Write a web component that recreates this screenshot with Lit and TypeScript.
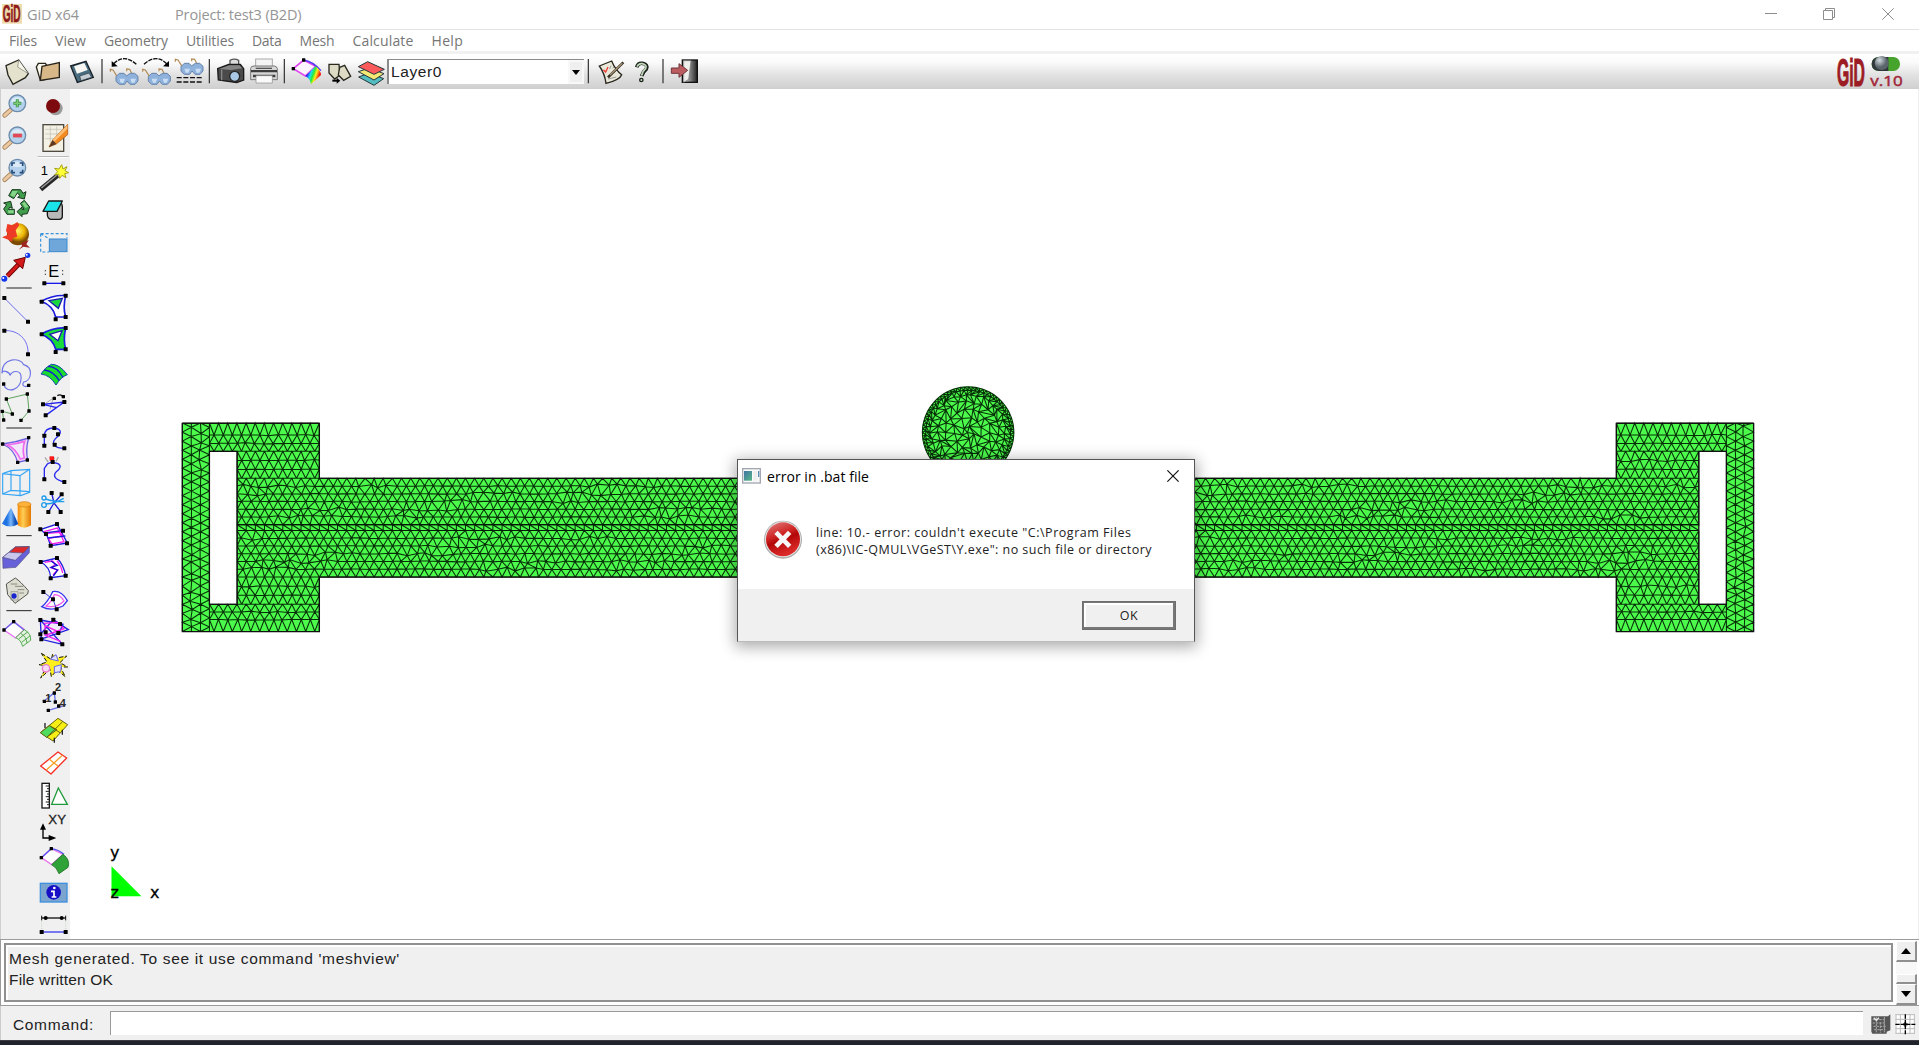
import { LitElement, html, svg, css } from "lit";
import { customElement } from "lit/decorators.js";

type Cell = [number, number, unknown];

/* ---------- small drawing helpers ---------- */
const dots = (pts: number[][], r = 6) =>
  pts.map(([x, y]) => svg`<rect x=${x - r} y=${y - r} width=${r * 2} height=${r * 2} rx="1.5" fill="#000"/>`);

const frame = (x0: number, x1: number, y0: number, y1: number, body: unknown) => html`<svg
  class="ic" width=${(x1 - x0) / 3} height=${(y1 - y0) / 3}
  viewBox="${x0} ${y0} ${x1 - x0} ${y1 - y0}">${body}</svg>`;

const lens = (y: number, mark: unknown) => svg`
  <path d="M14 ${y + 36} L32 ${y + 20}" stroke="#a5835c" stroke-width="14" stroke-linecap="round"/>
  <path d="M14 ${y + 36} L32 ${y + 20}" stroke="#ecc9a0" stroke-width="9" stroke-linecap="round"/>
  <circle cx="52" cy=${y} r="25" fill="#b4d2ee" stroke="#6d8cab" stroke-width="4"/>
  <path d="M33 ${y - 5} A20 19 0 0 1 71 ${y - 5} Q52 ${y + 2} 33 ${y - 5}" fill="#dcebf8"/>${mark}`;

const glasses = (x: number, y: number) => svg`
  <g fill="none" stroke="#b28a52" stroke-width="3.5"><path d="M${x + 22} ${y + 26} L${x + 8} ${y + 4} L${x} ${y + 2} V${y + 9}"/>
  <path d="M${x + 68} ${y + 22} L${x + 58} ${y + 2} L${x + 49} ${y + 1} V${y + 8}"/></g>
  <path d="M${x + 27} ${y + 14} h14 l8 8 6 -5 6 -3 h12 l10 9 v14 l-9 10 h-15 l-9 -10 -7 10 h-16 l-10 -9 v-14 z" fill="#8fb2dc" stroke="#6784aa" stroke-width="3"/>
  <path d="M${x + 27} ${y + 30} h17 l-5 12 h-8z M${x + 60} ${y + 30} h17 l-5 12 h-8z" fill="#c9def3"/>`;

/* ---------- left tool columns ---------- */
const colA: Cell[] = [
  [12, 108, lens(55, svg`<path d="M52 43v24M40 55h24" stroke="#3e9a4a" stroke-width="9"/><path d="M52 45v20M42 55h20" stroke="#7fca77" stroke-width="4"/>`)],
  [108, 207, lens(151, svg`<rect x="39" y="146" width="27" height="11" fill="#e2475a" stroke="#b98" stroke-width="1"/>`)],
  [207, 300, lens(248, svg`<path d="M36 243v-9h9M59 234h9v9M68 254v9h-9M45 263h-9v-9" fill="none" stroke="#244a78" stroke-width="5"/>`)],
  [300, 402, svg`<g fill="#3f9d4c" stroke="#17361b" stroke-width="3" stroke-linejoin="round">
    <path d="M26 332 L36 314 H62 L69 325 L78 320 L73 342 L53 337 L60 332 L52 324 L41 341Z"/>
    <path d="M73 346 L89 366 L82 386 L66 388 V395 L51 380 L66 366 V373 H72 L61 355Z"/>
    <path d="M43 388 H21 L11 372 L20 359 L11 354 L32 349 L37 370 L30 366 L25 373 H43Z"/></g>
    <path d="M37 318h16l-10 18-12-5z M66 355l8-5 11 15-9 4z M24 376h17v9H25z" fill="#85d489"/>`],
  [402, 498, svg`<defs><radialGradient id="sph" cx=".5" cy=".35"><stop offset="0" stop-color="#fff36b"/><stop offset=".6" stop-color="#eab400"/><stop offset="1" stop-color="#7c4a00"/></radialGradient></defs>
    <circle cx="54" cy="448" r="33" fill="url(#sph)"/>
    <path d="M22 417 L38 421 52 411 58 420 47 436 52 455 38 459 36 470 25 464 6 457 24 449 18 437Z" fill="#ee3b26"/>
    <path d="M64 474 L86 465 79 478 90 488 70 485 56 494 66 483Z" fill="#9c251d"/>`],
  [498, 597, svg`<path d="M22 573 L60 534" stroke="#6b0000" stroke-width="14"/><path d="M22 573 L60 534" stroke="#d3191a" stroke-width="9"/>
    <path d="M41 526 L76 517 L68 551Z" fill="#d3191a" stroke="#6b0000" stroke-width="3"/>
    <circle cx="83" cy="511" r="8" fill="#1236ee"/><circle cx="13" cy="581" r="9" fill="#1236ee"/><circle cx="80" cy="509" r="3" fill="#fff"/><circle cx="10" cy="579" r="3" fill="#fff"/>`],
  [597, 630, svg`<path d="M19 609H95" stroke="#222" stroke-width="3"/>`],
  [630, 720, svg`<g transform="translate(0 630)"><path d="M13 9 L84 80" stroke="#6f6ff0" stroke-width="3"/>${dots([[13, 9], [84, 80]])}</g>`],
  [720, 816, svg`<g transform="translate(0 630)"><path d="M13 107 C55 104 87 135 84 178" stroke="#6f6ff0" stroke-width="3" fill="none"/>${dots([[13, 107], [84, 178]])}</g>`],
  [816, 918, svg`<g transform="translate(0 630)"><path d="M6 235 C5 188 61 185 71 209 C101 217 95 258 71 261 C65 270 72 280 86 271 M6 235 C8 221 31 233 30 242 C36 225 62 225 63 244 C67 287 18 298 11 267" stroke="#6f75e6" stroke-width="3.5" fill="none"/>${dots([[11, 267], [86, 271]], 5)}</g>`],
  [918, 1014, svg`<g transform="translate(0 630)"><path d="M11 375 L7 349 L37 357 L19 312 L82 297 L87 348 L63 376" fill="none" stroke="#5da35f" stroke-width="3"/>${dots([[11, 375], [7, 349], [37, 357], [19, 312], [82, 297], [87, 348], [63, 376]], 5)}</g>`],
  [1014, 1044, svg`<path d="M19 1029H95" stroke="#222" stroke-width="3"/>`],
  [1044, 1140, svg`<g transform="translate(0 630)"><path d="M8 447 Q48 442 86 429 Q76 462 83 495 L53 502 Q43 463 8 447Z" fill="#f6d8f4" stroke="#6c62df" stroke-width="4"/><path d="M22 450 Q51 446 74 439 Q66 464 73 489 L61 492 Q48 462 22 450Z" fill="#efe9fb" stroke="#f069ee" stroke-width="5"/>${dots([[8, 447], [86, 428], [82, 495], [53, 502]], 5)}</g>`],
  [1140, 1245, svg`<g transform="translate(0 630)" fill="none" stroke="#36a5f5" stroke-width="3.5"><path d="M8 536 L33 527 L89 523 V592 L62 602 L8 597Z M8 536 L60 542 L89 523 M60 542 V602 M33 527 V586 L8 597 M33 586 L89 590"/></g>`],
  [1245, 1338, svg`<defs><linearGradient id="cyl"><stop offset="0" stop-color="#f98a05"/><stop offset=".4" stop-color="#ffce55"/><stop offset="1" stop-color="#e37800"/></linearGradient><linearGradient id="cone"><stop offset=".3" stop-color="#1e72e2"/><stop offset=".55" stop-color="#7bb8fa"/><stop offset=".8" stop-color="#1153bd"/></linearGradient></defs>
    <path d="M53 1259 V1321 Q73 1335 93 1321 V1259Z" fill="url(#cyl)"/><ellipse cx="73" cy="1258" rx="20" ry="8" fill="#ffb239" stroke="#d17b14" stroke-width="2"/>
    <path d="M33 1268 L6 1316 Q29 1333 55 1317Z" fill="url(#cone)"/>`],
  [1338, 1368, svg`<path d="M19 1352H95" stroke="#222" stroke-width="3"/>`],
  [1368, 1464, svg`<g transform="translate(0 1260)" stroke="#55507f" stroke-width="2" stroke-linejoin="round"><path d="M8 157 L46 126 L88 125 V143 L48 187 L9 190Z" fill="#6761d9"/><path d="M8 157 L46 126 L88 125 L46 166Z" fill="#c9c7ee"/><path d="M46 126 L88 125 L70 144 L29 142Z" fill="#dc2a2a"/></g>`],
  [1464, 1563, svg`<g transform="translate(0 1260)"><path d="M19 237 L46 219 Q61 229 85 257 L83 267 L45 295 L23 269Z" fill="#deddd1" stroke="#55554d" stroke-width="3"/><path d="M32 237h20M45 244h25M53 254h20M58 264h14" stroke="#8a8a80" stroke-width="3"/><circle cx="42" cy="273" r="8" fill="#1827ce"/><path d="M33 260h21v25H33z" fill="none" stroke="#888" stroke-width="2"/></g>`],
  [1563, 1590, svg`<path d="M19 1577H95" stroke="#222" stroke-width="3"/>`],
  [1590, 1695, svg`<g transform="translate(0 1260)"><path d="M12 375 L41 350 L73 374 L47 399Z" fill="#fff" stroke="#e86cf0" stroke-width="4"/><path d="M12 375 L41 350 L75 377" fill="none" stroke="#6c66ea" stroke-width="4"/><path d="M73 374 Q94 386 92 406 L68 424 Q62 403 47 398Z M63 386 Q79 395 81 414 M65 412 L91 392 M57 401 L84 380" fill="#e3f2df" stroke="#55aa50" stroke-width="3"/>${dots([[12, 375], [41, 350]], 5)}</g>`],
];

const curvy = "M123 73 L171 57 L202 114 L152 122 L142 94 Z";
const colB: Cell[] = [
  [12, 108, svg`<circle cx="167" cy="70" r="21" fill="#9a9a9a"/><circle cx="159" cy="63" r="21" fill="#7d0a0e"/>`],
  [108, 204, svg`<rect x="129" y="119" width="62" height="80" fill="#f3f1e4" stroke="#4f4a40" stroke-width="4"/><path d="M136 133H190M136 147H190M136 161H185M151 124V174M170 124V170" stroke="#bdbcb1" stroke-width="2"/><path d="M147 186 L158 165 L203 118 V149 L169 177Z" fill="#f28b21" stroke="#a45310" stroke-width="2"/><path d="M158 165 L202 120 V131 L163 170Z" fill="#ffc178"/><path d="M147 186 L158 165 L169 177Z" fill="#5a3a25"/>`],
  [204, 228, svg`<path d="M113 215H206" stroke="#b0b0b0" stroke-width="3"/><path d="M113 218H206" stroke="#fff" stroke-width="3"/>`],
  [228, 330, svg`<text x="122" y="270" font-family="Liberation Sans" font-size="39">1</text><path d="M122 313 L173 271" stroke="#262626" stroke-width="14"/><path d="M124 309 L170 271" stroke="#9a9a9a" stroke-width="4"/><path d="M185 239 L189 252 L201 245 L195 257 L206 263 L194 266 L198 278 L186 271 L179 280 L176 268 L164 270 L173 260 L164 250 L177 252Z" fill="#ffff35" stroke="#a6a215" stroke-width="3"/>`],
  [330, 420, svg`<path d="M143 362 L182 354 Q187 356 187 364 V394 Q187 403 178 403 H152 Q142 401 142 388Z" fill="#b9b9b9" stroke="#161616" stroke-width="4"/><path d="M146 348 H187 L171 379 H129Z" fill="#1be3ea" stroke="#161616" stroke-width="4" stroke-linejoin="round"/>`],
  [420, 519, svg`<path d="M122 446 H201 V460 M122 446 V501 H147 M122 446 L148 462" fill="none" stroke="#3792d8" stroke-width="3.5" stroke-dasharray="9 6"/><rect x="148" y="462" width="53" height="38" fill="#70a7da" stroke="#3888cd" stroke-width="3"/>`],
  [519, 615, svg`<text x="145" y="577" font-family="Liberation Sans" font-size="50" textLength="33" lengthAdjust="spacingAndGlyphs">E</text><path d="M136 555V574M188 555V574" stroke="#333" stroke-width="3" stroke-dasharray="4 7"/><path d="M133 595H190" stroke="#1818e8" stroke-width="4"/>${dots([[133, 595], [190, 595]])}`],
  [615, 717, svg`<g transform="translate(0 630)"><path d="M124 19 Q160 -1 197 2 Q188 38 197 66 H167 Q160 33 124 19Z" fill="#fff" stroke="#1c1ce0" stroke-width="5"/><path d="M147 17 L187 10 L175 40Z" fill="#1ad83e" stroke="#1c1cb0" stroke-width="4"/>${dots([[125, 20], [197, 2], [197, 66], [167, 73]], 6)}</g>`],
  [717, 816, svg`<g transform="translate(0 630)"><path d="M124 118 Q160 96 197 99 Q189 134 197 163 H167 Q158 131 124 118Z" fill="#17dc38" stroke="#1c1ce0" stroke-width="5"/><path d="M149 118 L186 107 L174 137Z" fill="#fff" stroke="#1c1cb0" stroke-width="4"/>${dots([[125, 118], [197, 99], [197, 163], [167, 171]], 6)}</g>`],
  [816, 915, svg`<g transform="translate(0 630)"><path d="M123 237 Q135 217 154 208 Q178 207 202 239 Q184 245 168 270 Q150 240 123 237Z" fill="#1adc2d" stroke="#1645ae" stroke-width="3"/><path d="M133 225 Q160 228 177 256 M144 214 Q172 215 188 246" fill="none" stroke="#1418d5" stroke-width="4"/></g>`],
  [915, 1014, svg`<g transform="translate(0 630)"><path d="M136 326 L160 309 L150 343" fill="none" stroke="#aaa" stroke-width="3"/><path d="M129 328 L193 321 L137 361 M129 328 L170 338" fill="none" stroke="#2424ee" stroke-width="4"/><path d="M172 302 Q184 295 192 309" fill="none" stroke="#111" stroke-width="4"/>${dots([[129, 328], [193, 321], [137, 361]], 6)}${dots([[163, 310], [190, 305]], 5)}</g>`],
  [1014, 1107, svg`<g transform="translate(0 630)"><path d="M133 452 V422 Q134 398 163 399 Q192 404 174 424 Q153 440 164 451 Q171 460 193 460" fill="none" stroke="#2929f1" stroke-width="4"/>${dots([[133, 422], [133, 452], [163, 399], [174, 418], [164, 449], [193, 460]])}</g>`],
  [1107, 1212, svg`<g transform="translate(0 630)"><path d="M133 553 V520 L142 507 L155 501 L174 506 Q189 515 169 530 Q151 550 193 561" fill="none" stroke="#2929f1" stroke-width="4"/><path d="M135 487 L145 502 M149 485 L153 496 M164 488 L158 498 M175 486 L168 499" stroke="#aaa" stroke-width="4"/><rect x="149" y="484" width="13" height="13" fill="#ff1616"/>${dots([[158, 501], [133, 553], [193, 561]])}</g>`],
  [1212, 1302, svg`<g transform="translate(0 630)"><path d="M155 594 L162 624 L145 652 M185 598 L162 624 L182 650" fill="none" stroke="#2020d8" stroke-width="4"/><path d="M137 612 Q160 620 193 620 M137 627 Q167 625 191 610" fill="none" stroke="#209cec" stroke-width="4"/><circle cx="132" cy="609" r="6" fill="none" stroke="#209cec" stroke-width="4"/><circle cx="132" cy="630" r="7" fill="none" stroke="#209cec" stroke-width="4"/>${dots([[155, 594], [185, 598], [145, 651], [182, 651]])}</g>`],
  [1302, 1401, svg`<g transform="translate(0 1260)"><path d=${curvy} fill="#fff" stroke="#1c1cdc" stroke-width="4"/><path d="M132 80 L172 69 L184 93 L192 110 L156 117 L145 100 L188 93 L180 82 L143 85" fill="none" stroke="#f21eed" stroke-width="4"/><path d="M133 84 L187 77 M143 99 L196 93" stroke="#1c1cdc" stroke-width="4"/>${dots([[121, 73], [171, 57], [201, 115], [152, 122], [138, 87], [189, 77]])}</g>`],
  [1401, 1500, svg`<g transform="translate(0 1260)"><path d="M122 171 L171 159 Q190 178 197 212 L152 218 Q150 185 122 171Z" fill="#fff" stroke="#1c1cdc" stroke-width="4"/><path d="M134 172 L158 168 L166 178 L153 188 L173 195 L159 209 M171 167 Q184 183 188 204" fill="none" stroke="#f21eed" stroke-width="4"/><path d="M153 168 L172 181 L153 187 L173 195 L160 213" fill="none" stroke="#1010ce" stroke-width="4"/>${dots([[122, 171], [171, 159], [197, 212], [152, 220]])}</g>`],
  [1500, 1596, svg`<g transform="translate(0 1260)"><path d="M158 260 Q184 255 202 287 L189 303 Q154 321 125 305 Q143 292 158 260Z" fill="#fff" stroke="#3636ee" stroke-width="4"/><path d="M163 269 Q181 268 192 288 Q169 311 138 303 Q155 290 163 269Z" fill="none" stroke="#f05dea" stroke-width="4"/><path d="M130 261 L159 283 L170 314" fill="none" stroke="#4242ce" stroke-width="3"/>${dots([[130, 261], [159, 283], [170, 313]])}</g>`],
  [1596, 1692, svg`<g transform="translate(0 1260)"><path d="M121 345 L187 418 L124 403Z M121 388 L160 344 L205 374 L121 403 M121 345 L189 358 L175 388" fill="#f1e8ff" fill-opacity=".6" stroke="#2020dd" stroke-width="4"/><path d="M131 355 L172 352 L192 371 L137 391 L182 409 M135 391 V362 L174 380" fill="none" stroke="#f21eed" stroke-width="4"/>${dots([[121, 345], [160, 344], [187, 418], [124, 403], [137, 382], [175, 384], [121, 388], [180, 357]])}</g>`],
  [1692, 1788, svg`<g transform="translate(0 1260)"><path d="M124 445 L154 463 L158 447 L170 459 L200 453 L180 473 L203 486 L181 486 L196 515 L171 495 L154 515 L150 493 L122 519 L140 483 L117 479 L141 471Z" fill="#ffef1c" stroke="#181804" stroke-width="3" stroke-dasharray="13 6"/><circle cx="138" cy="490" r="11" fill="#f8dcf3" stroke="#e87ed3" stroke-width="4"/><path d="M163 485 L184 479 L182 500 L163 503Z M151 462 L168 449 L175 468Z" fill="#e1e2fa" stroke="#6666e4" stroke-width="3"/></g>`],
  [1788, 1890, svg`<g transform="translate(0 1260)"><path d="M133 588 L163 563 L166 591 M145 616 L196 601" stroke="#6770e3" stroke-width="4" fill="none"/><g font-family="Liberation Sans" font-size="33" font-weight="bold" fill="#2b2b2b"><text x="165" y="559">2</text><text x="136" y="590">1</text><text x="179" y="605">4</text></g>${dots([[133, 589], [163, 564], [166, 591], [145, 616], [176, 603]], 5)}</g>`],
  [1890, 1986, svg`<g transform="translate(0 1890)" stroke="#66640d" stroke-width="3"><path d="M121 53 L174 10 L203 29 L159 78Z" fill="#f7ef13"/><path d="M121 53 L148 32 L171 44 L140 67Z" fill="#4edc5f"/><path d="M148 32 L180 53 M140 67 L188 20" fill="none"/><path d="M135 24 V39 M187 44 V59 M163 68 V83" stroke="#222" stroke-width="4"/></g>`],
  [1986, 2082, svg`<g transform="translate(0 1890)" fill="none" stroke-linejoin="round"><path d="M122 153 L174 111 L200 129 L153 177Z" fill="#fff" stroke="#f62f26" stroke-width="4"/><path d="M139 165 L187 121 M148 133 L175 154" stroke="#f6a12a" stroke-width="4"/></g>`],
  [2082, 2178, svg`<g transform="translate(0 1890)"><rect x="126" y="205" width="22" height="74" fill="#fff" stroke="#191919" stroke-width="4"/><path d="M137 213h10M141 221h6M137 229h10M141 237h6M137 245h10M141 253h6M137 261h10M141 269h6" stroke="#222" stroke-width="3"/><path d="M175 219 L202 268 H155Z" fill="#fff" stroke="#229a3c" stroke-width="4"/></g>`],
  [2178, 2280, svg`<g transform="translate(0 1890)"><text x="145" y="326" font-family="Liberation Sans" font-size="36" textLength="53" lengthAdjust="spacingAndGlyphs" fill="#222" stroke="#222" stroke-width=".8">XY</text><path d="M129 340 V369 H148" fill="none" stroke="#000" stroke-width="4"/><path d="M129 325 L138 344 H120Z M169 369 L146 360 V378Z"/></g>`],
  [2280, 2379, svg`<g transform="translate(0 1890)"><path d="M124 428 L154 401 L189 418 L155 449Z" fill="#fff" stroke="#e979ee" stroke-width="4"/><path d="M124 428 L154 401 Q176 404 192 418" fill="none" stroke="#5959ef" stroke-width="4"/><path d="M155 449 L189 418 Q211 434 204 457 L177 476 Q171 457 155 449Z" fill="#2fa238" stroke="#297b31" stroke-width="3"/>${dots([[124, 428], [154, 401]], 5)}</g>`],
  [2379, 2466, svg`<g transform="translate(0 1890)"><rect x="121" y="505" width="80" height="56" fill="#7ba5cf" stroke="#3c90df" stroke-width="4"/><circle cx="161" cy="532" r="22" fill="#170ec6"/><path d="M153 529 H162 V546 M155 546 H169" stroke="#fff" stroke-width="5" fill="none"/><circle cx="163" cy="519" r="4" fill="#fff"/></g>`],
  [2466, 2562, svg`<g transform="translate(0 1890)"><path d="M125 609H197" stroke="#111" stroke-width="4"/><path d="M125 602V616M197 602V616" stroke="#111" stroke-width="3"/><circle cx="137" cy="609" r="6"/><circle cx="185" cy="609" r="6"/><path d="M125 618V645M197 618V645" stroke="#a8c8a8" stroke-width="2" stroke-dasharray="3 4"/><path d="M125 651H197" stroke="#3b3bf1" stroke-width="4"/>${dots([[125, 651], [197, 651]])}</g>`],
];

/* ---------- top toolbar ---------- */
const sepT = (x: number) => svg`<path d="M${x} 177V250" stroke="#2b2b2b" stroke-width="3.5"/>`;
const barLeft: Cell[] = [
  [0, 96, svg`<path d="M18 197 L56 180 L85 221 L76 233 L39 253 L24 225Z" fill="#e4e2cd" stroke="#26261e" stroke-width="4"/><path d="M56 180 L53 201 L85 221" fill="#f7f6ea" stroke="#77756a" stroke-width="2"/>`],
  [96, 198, svg`<path d="M109 201 L115 190 H136 L141 197 L133 239 L121 241Z" fill="#faf9ef" stroke="#29241a" stroke-width="4"/><path d="M126 199 L178 188 V232 L121 241Z" fill="#d8b789" stroke="#29241a" stroke-width="4"/>`],
  [198, 294, svg`<path d="M212 198 L258 184 L280 232 L232 247Z" fill="#496d80" stroke="#182026" stroke-width="4"/><path d="M222 199 L253 189 L263 210 L231 221Z" fill="#f6f6f2"/><path d="M239 228 L267 219 L275 232 L243 242Z" fill="#c2ccd2" stroke="#26353d" stroke-width="2"/>`],
  [294, 315, sepT(306)],
  [315, 420, svg`${glasses(331, 206)}<path d="M341 191 Q373 160 409 193" fill="none" stroke="#111" stroke-width="4" stroke-dasharray="13 3"/><path d="M335 183 V200 L353 199Z"/>`],
  [420, 522, svg`${glasses(428, 206)}<path d="M432 193 Q468 160 500 191" fill="none" stroke="#111" stroke-width="4" stroke-dasharray="13 3"/><path d="M507 183 V200 L489 199Z"/>`],
  [522, 618, svg`${glasses(526, 176)}<path d="M530 233H608M530 246H608" stroke="#111" stroke-width="4" stroke-dasharray="15 5"/>`],
  [618, 639, sepT(628)],
  [639, 741, svg`<path d="M690 195 V181 Q703 174 716 181 V195" fill="#ddd" stroke="#555" stroke-width="4"/><path d="M653 206 L686 193 H721 L731 206 V240 L710 248 L655 240Z" fill="#4a4a4a" stroke="#191919" stroke-width="4"/><path d="M657 207 L688 196 H718 L727 205 L693 210Z" fill="#858585"/><circle cx="704" cy="229" r="15" fill="#a9c8e5" stroke="#252525" stroke-width="4"/><path d="M665 209V241" stroke="#888" stroke-width="4"/>`],
  [741, 843, svg`<rect x="767" y="177" width="50" height="26" fill="#f5f5f5" stroke="#aaa" stroke-width="3"/><path d="M752 205 Q753 198 762 198 H823 Q831 199 832 206 V239 H752Z" fill="#d7d7d7" stroke="#777" stroke-width="3"/><path d="M753 210H831V217H753zM759 224H826V232H759z" fill="#3d3d3d"/><path d="M768 227H817V249H768z" fill="#fafafa" stroke="#888" stroke-width="2"/><rect x="767" y="203" width="49" height="4" fill="#555"/>`],
  [843, 864, sepT(853)],
  [864, 972, svg`<defs><linearGradient id="rain" x1="0" y1=".4" x2="1" y2=".8"><stop offset=".1" stop-color="#2517ec"/><stop offset=".3" stop-color="#1ddef2"/><stop offset=".45" stop-color="#24ea35"/><stop offset=".6" stop-color="#ffec1c"/><stop offset=".82" stop-color="#f50e0e"/></linearGradient></defs><path d="M880 206 L911 180 L947 199 L916 228Z" fill="#fdf4ff" stroke="#df45f1" stroke-width="5"/><path d="M911 180 Q938 184 963 212" fill="none" stroke="#5738ee" stroke-width="4"/><path d="M916 228 L947 199 Q962 211 963 225 L933 253 Q930 235 916 228Z" fill="url(#rain)"/>${dots([[880, 206], [911, 180]], 5)}`],
  [972, 1068, svg`<g fill="#dddbc5" stroke="#29281e" stroke-width="4"><path d="M987 193 L1017 193 L1020 225 L1004 237 L987 219Z"/><path d="M1019 202 L1034 196 L1052 229 L1031 241 L1015 225Z"/></g><path d="M997 242H1012" stroke="#000" stroke-width="6"/><path d="M1010 233L1021 242L1010 251Z"/>`],
  [1068, 1158, svg`<g stroke="#24363a" stroke-width="3" stroke-linejoin="round"><path d="M1076 231 L1108 219 L1151 236 L1122 256Z" fill="#53bcc0"/><path d="M1075 215 L1108 204 L1152 221 L1122 240Z" fill="#f3e873"/><path d="M1075 200 L1103 185 L1153 208 L1122 223Z" fill="#fb5a5c"/></g>`],
];
const barRight: Cell[] = [
  [672, 699, sepT(685)],
  [699, 810, svg`<path d="M718 198 L755 183 Q766 210 785 224 Q780 239 738 250 Q734 220 718 198Z" fill="#e9e8da" stroke="#28251c" stroke-width="4"/><path d="M730 209 L737 216 L744 201" fill="none" stroke="#ef3d32" stroke-width="4"/><path d="M749 207l4 -10M758 204l4 -3M744 237L769 231" stroke="#999" stroke-width="3"/><path d="M744 232 L790 187" stroke="#352c20" stroke-width="8"/><path d="M750 225 L787 190" stroke="#a9967a" stroke-width="4"/>`],
  [810, 885, svg`<path d="M830 202 Q834 188 847 190 Q865 194 859 207 Q848 216 845 228" fill="none" stroke="#1a231b" stroke-width="11"/><path d="M831 200 Q836 189 847 191 Q862 195 857 206 Q847 214 845 227" fill="none" stroke="#c2d7bb" stroke-width="5"/><circle cx="844" cy="240" r="5" fill="#cbdcc6" stroke="#1a231b" stroke-width="4"/>`],
  [885, 924, sepT(909)],
  [924, 1020, svg`<defs><linearGradient id="door"><stop offset="0" stop-color="#eee"/><stop offset="1" stop-color="#222"/></linearGradient></defs><rect x="967" y="180" width="45" height="67" fill="url(#door)" stroke="#111" stroke-width="4"/><path d="M971 182 H993 L986 238 L971 247Z" fill="#eeeeeb" stroke="#777" stroke-width="2"/><path d="M934 204 H957 V191 L983 211 L957 232 V220 H934Z" fill="#ba5c60" stroke="#70373b" stroke-width="3"/>`],
];
/* Condensed logotype: the natural width of "GiD" at this size is 89 units. */
const gid = (x: number, y: number, w: number, h: number, c: string) => svg`<text transform="translate(${x} ${y + h}) scale(${w / 89} ${h / 36})" font-family="Liberation Sans" font-weight="bold" font-size="50" fill=${c} stroke=${c} stroke-width="1.500">GiD</text>`;

/* ---------- finite element mesh ---------- */
type P = [number, number];
let seed = 11;
const rnd = () => ((seed = (seed * 16807) % 2147483647) / 2147483647);

/* Rows of points, every second row shifted by half a cell, joined into triangles. */
const band = (u0: number, u1: number, rows: number[], step: number, jit: number, swap = false): string => {
  const n = Math.round((u1 - u0) / step);
  const w = (u1 - u0) / n;
  const grid: P[][] = rows.map((v, r) => {
    const us: number[] = [];
    if (r % 2 === 0) for (let i = 0; i <= n; i++) us.push(u0 + i * w);
    else {
      us.push(u0);
      for (let i = 0; i < n; i++) us.push(u0 + (i + 0.5) * w);
      us.push(u1);
    }
    const edge = r === 0 || r === rows.length - 1;
    return us.map((u, i): P => {
      const end = i === 0 || i === us.length - 1;
      const local = jit * (Math.sin(u / 19 + v / 7) + Math.sin(u / 53 + v) > 0.6 ? 2.5 : 0.5);
      return [end || edge ? u : u + (rnd() - 0.5) * local * 2, edge || end ? v : v + (rnd() - 0.5) * local * 1.7];
    });
  });
  const pt = ([a, b]: P) => (swap ? `${b.toFixed(1)} ${a.toFixed(1)}` : `${a.toFixed(1)} ${b.toFixed(1)}`);
  let d = "";
  grid.forEach((g, r) => {
    d += "M" + g.map(pt).join("L");
    const q = grid[r + 1];
    if (!q) return;
    const [even, odd] = r % 2 === 0 ? [g, q] : [q, g];
    for (let i = 0; i < even.length; i++) d += `M${pt(odd[i])}L${pt(even[i])}L${pt(odd[i + 1])}`;
  });
  return d;
};
const split = (a: number, b: number, n: number) => Array.from({ length: n + 1 }, (_, i) => a + ((b - a) * i) / n);

const diagonals = (x0: number, x1: number, y0: number, y1: number, n: number) => {
  let d = "";
  for (let i = 0; i < n; i++) {
    const a = x0 + ((x1 - x0) * i) / n, b = x0 + ((x1 - x0) * (i + 1)) / n;
    d += `M${a.toFixed(1)} ${y0}V${y1}M${a.toFixed(1)} ${y0}L${b.toFixed(1)} ${y1}`;
  }
  return d;
};

const disc = (cx: number, cy: number): string => {
  const spec = [[45.8, 76], [42.4, 66], [37.5, 38], [30.5, 25], [22.5, 18], [14.5, 11], [6.5, 5], [0.5, 1]];
  const rings = spec.map(([r, n], k) =>
    Array.from({ length: n }, (_, i) => {
      const t = ((i + (k % 2) / 2) / n) * Math.PI * 2, rr = r + (k > 1 && k < 7 ? (rnd() - 0.5) * 3.4 : 0);
      const tt = t + (k > 1 && k < 7 ? (rnd() - 0.5) * (3 / r) : 0);
      return `${(cx + rr * Math.cos(tt)).toFixed(1)} ${(cy + rr * Math.sin(tt)).toFixed(1)}`;
    }));
  let d = "";
  rings.forEach((ring, k) => {
    d += "M" + ring.join("L") + "Z";
    const inner = rings[k + 1];
    if (!inner) return;
    let i = 0, j = 0;
    while (i < ring.length || j < inner.length) {
      d += `M${ring[i % ring.length]}L${inner[j % inner.length]}`;
      if ((i + 1) / ring.length <= (j + 1) / inner.length) i++;
      else j++;
    }
  });
  return d;
};

const bracket = (outer: number, h0: number, h1: number, inner: number) =>
  band(423, 631.5, split(outer, h0, 3), 9.1, 0.7, true) +
  band(Math.min(h0, inner), Math.max(h0, inner), [423, 435, 443.4, 451.3], 9.15, 0.4) +
  band(Math.min(h1, inner), Math.max(h1, inner), split(451.3, 478.3, 3), 9.15, 0.6) +
  band(Math.min(h1, inner), Math.max(h1, inner), split(577, 604.3, 3), 9.15, 0.7) +
  band(Math.min(h0, inner), Math.max(h0, inner), [604.3, 612, 619.5, 631.5], 9.15, 0.4);

const meshPath =
  bracket(182.4, 209.5, 237.2, 319.5) + bracket(1754.5, 1727.3, 1699.7, 1617.2) +
  band(237.2, 1699.7, split(478.3, 524.7, 6), 9.15, 1) +
  diagonals(237.2, 1699.7, 524.7, 530.5, 160) +
  band(237.2, 1699.7, split(530.5, 577, 6), 9.15, 1) +
  disc(968.6, 432.5);
const outline =
  "M182.4 423.4H319.5V478.4H1617.2V423.4H1754.5V631.6H1617.2V577.1H319.5V631.6H182.4ZM209.5 451.4V604.4H237.2V451.4ZM1699.7 451.4V604.4H1727.3V451.4Z";

@customElement("app-root")
export class AppRoot extends LitElement {
  static styles = css`
    :host { display: block; width: 1919px; height: 1045px; overflow: hidden; background: #fff; position: relative;
      font-family: "Open Sans", "Noto Sans", sans-serif; color: #000; }
    * { box-sizing: border-box; }
    .win { display: flex; flex-direction: column; height: 1045px; }
    .ic { display: block; flex: none; fill: none; }
    .fit { white-space: pre; display: inline-block; flex: none; }
    .title { height: 30px; display: flex; align-items: center; border-bottom: 1px solid #e3e3e3; color: #959595; font-size: 14.5px; flex: none; }
    .title .name { margin-left: 5px; width: 148px; display: flex; }
    .title .fit { line-height: 20px; }
    .title .grow { flex: 1; }
    .menu { height: 24px; border-bottom: 3px solid #f1f1f1; display: flex; align-items: center; padding-left: 9px; gap: 18px;
      font-size: 14px; color: #767676; flex: none; }
    .tools { height: 35px; flex: none; display: flex; background: linear-gradient(#fff 0%, #fafafa 25%, #e2e2e2 60%, #cfcfcf 100%); }
    .combo { width: 197px; height: 25px; margin: 5px 0 0 1px; border-top: 1.5px solid #8b8b8b; border-left: 2px solid #8b8b8b; background: #fff;
      display: flex; align-items: center; padding-left: 2px; font: 15.5px "Liberation Sans", sans-serif; color: #222; justify-content: space-between; }
    .arrow { width: 16px; height: 24px; background: #efefef; border: 2px solid #f8f8f8; display: grid; place-items: center; }
    .push { flex: 1; }
    .body { flex: 1; display: flex; min-height: 0; }
    .side { width: 70px; background: #f0f0f0; border-left: 1px solid #cfcfcf; display: flex; flex: none; }
    .col { width: 35px; display: flex; flex-direction: column; }
    .col.first { margin-left: -1px; }
    .view { display: block; flex: none; border-right: 1px solid #f0f0f0; }
    .log { height: 67px; flex: none; border: 1px solid #9c9c9c; border-width: 1px 0 1px 1px; background: #fff; display: flex; padding: 2px 2px 0 3px; }
    .logbox { width: 1889px; height: 59px; margin-top: 1px; border: 2px solid #909090; background: #f0f0f0; padding: 3px 3px;
      box-shadow: inset 2px 2px #fff; display: flex; flex-direction: column; font: 15.5px/21px "Liberation Sans", sans-serif; color: #222; }
    .scroll { margin-left: 3px; width: 21px; display: flex; flex-direction: column; background: #f8f8f8; margin-top: -1px; }
    .sb { height: 21px; border: solid; border-width: 1px 2px 2px 1px; border-color: #fff #909090 #909090 #fff; background: #efefef; display: grid; place-items: center; }
    .thumb { height: 10px; margin-top: 12px; border: solid; border-width: 1px 2px 2px 1px; border-color: #fff #909090 #909090 #fff; background: #efefef; }
    .cmd { height: 34px; flex: none; background: #f0f0f0; border-left: 1px solid #ccc; display: flex; padding: 5px 0 0 12px; font: 15.5px/27px "Liberation Sans", sans-serif; color: #222; }
    .field { width: 1753px; height: 24px; background: #fff; border-top: 1.5px solid #999; border-left: 1.5px solid #999; }
    .cmd .lbl { width: 97px; }
    .cmd .ends { margin-left: 7px; }
    .task { height: 5px; background: linear-gradient(#3a3b40 0 1px, #20232c 1px); flex: none; }
    .dlg { position: absolute; left: 737px; top: 459px; width: 458px; height: 183px; background: #fff; border: 1px solid #555; border-bottom-color: #bbb;
      box-shadow: 0 3px 14px 2px rgba(0, 0, 0, .33); display: flex; flex-direction: column; }
    .dtitle { height: 34px; display: flex; align-items: center; padding: 0 15px 2px 4px; font-size: 14px; flex: none; }
    .dtitle .fit { margin-left: 6px; }
    .dtitle .push { flex: 1; }
    .dbody { flex: 1; display: flex; align-items: center; padding: 0 0 3px 25px; font-size: 12.5px; line-height: 16.5px; color: #222; }
    .msg { display: flex; flex-direction: column; margin-left: 13px; align-items: flex-start; padding-top: 3px; }
    .dfoot { height: 52px; background: #f0f0f0; display: flex; justify-content: flex-end; padding: 12px 18px 0 0; flex: none; }
    .ok { width: 94px; height: 29px; border: 1px solid #6d6d6d; background: #f0f0f0; box-shadow: inset -2px -2px #777, inset 1px 1px #777, inset 3px 3px #fff;
      display: flex; align-items: center; justify-content: center; font-size: 12.5px; color: #222; }
  `;

  /* Tracks each label out or in so that it takes its designed width. */
  firstUpdated() {
    this.renderRoot.querySelectorAll<HTMLElement>(".fit").forEach((el) => {
      const want = Number(el.dataset.w);
      const n = (el.textContent ?? "").length;
      el.style.letterSpacing = `${((want - el.getBoundingClientRect().width) / n).toFixed(3)}px`;
    });
  }

  private fit(text: string, w: number) {
    return html`<span class="fit" data-w=${w}>${text}</span>`;
  }

  render() {
    const menus: [string, number][] = [["Files", 28], ["View", 31], ["Geometry", 64], ["Utilities", 48], ["Data", 29.5], ["Mesh", 35], ["Calculate", 61], ["Help", 31.5]];
    return html`<div class="win">
      <div class="title">
        ${frame(0, 66, 0, 87, svg`<rect x="6" y="12" width="60" height="59" fill="#eddcae"/>${gid(8, 16, 54, 51, "#8f1a1d")}`)}
        <span class="name">${this.fit("GiD x64", 52)}</span>${this.fit("Project: test3 (B2D)", 126.5)}<span class="grow"></span>
        ${frame(180, 657, 0, 87, svg`<g fill="none" stroke="#8d8d8d" stroke-width="3"><path d="M195 40.5H231M370.500 31.500H397.500V58.500H370.500ZM376.500 31V25.500H403.500V52.500H398"/><path d="M547 25L581 59M581 25L547 59"/></g>`)}
      </div>
      <div class="menu">${menus.map(([t, w]) => this.fit(t, w))}</div>
      <div class="tools">
        ${barLeft.map(([a, b, c]) => frame(a, b, 162, 267, svg`<g fill="#000">${c}</g>`))}
        <div class="combo">${this.fit("Layer0", 51)}<span class="arrow"><svg width="8" height="5"><path d="M0 0H8L4 5Z"/></svg></span></div>
        ${barRight.map(([a, b, c]) => frame(a, b, 162, 267, svg`<g fill="#000">${c}</g>`))}
        <span class="push"></span>
        ${frame(405, 657, 162, 267, svg`<defs><radialGradient id="knob" cx=".35" cy=".3"><stop offset="0" stop-color="#d4dce0"/><stop offset="1" stop-color="#59646b"/></radialGradient></defs>
          ${gid(411, 172, 84, 85, "#9c1c24")}
          <rect x="515" y="171" width="85" height="42" rx="20" fill="#46a32c"/><path d="M536 171 H565 V213 H536 Q515 211 515 192 Q515 173 536 171Z" fill="#30383c"/><circle cx="545" cy="189" r="21" fill="url(#knob)"/>
          <text x="511" y="258" font-family="Open Sans" font-size="46" fill="#a32538" stroke="#a32538" stroke-width="1.500" textLength="97" lengthAdjust="spacingAndGlyphs">v.10</text>`)}
      </div>
      <div class="body">
        <div class="side">
          <div class="col first">${colA.map(([a, b, c]) => frame(0, 105, a, b, svg`<g fill="#000">${c}</g>`))}</div>
          <div class="col">${colB.map(([a, b, c]) => frame(105, 210, a, b, svg`<g fill="#000">${c}</g>`))}</div>
        </div>
        <svg class="view" width="1849" height="850" viewBox="70 89 1849 850">
          <path d=${outline} fill="#4cfa4c" fill-rule="evenodd"/>
          <circle cx="968.6" cy="432.5" r="46" fill="#4cfa4c"/>
          <path d=${meshPath} fill="none" stroke="#001c00" stroke-width="1.050" stroke-opacity=".92"/>
          <path d=${outline} fill="none" stroke="#111" stroke-width="1.300"/>
          <path d="M237 524.700H1699.500M237 530.500H1699.500" stroke="#061806" stroke-width="1.200"/>
          <path d="M111.500 866.500V896.500H141.500Z" fill="#0f0"/>
          <g font-family="DejaVu Sans" font-size="16" stroke="#000" stroke-width=".3"><text x="110" y="858.500">y</text><text x="110.500" y="898">z</text><text x="150" y="898">x</text></g>
        </svg>
      </div>
      <div class="log">
        <div class="logbox"><div>${this.fit("Mesh generated. To see it use command 'meshview'", 391)}</div><div>${this.fit("File written OK", 104)}</div></div>
        <div class="scroll"><div class="sb"><svg width="10" height="6"><path d="M0 6H10L5 0Z"/></svg></div><div class="thumb"></div><div class="sb"><svg width="10" height="6"><path d="M0 0H10L5 6Z"/></svg></div></div>
      </div>
      <div class="cmd"><span class="lbl">${this.fit("Command:", 81)}</span><div class="field"></div>
        <div class="ends">${frame(330, 468, 258, 336, svg`
          <path d="M334 274H384L391 268V316L380 320V326H337L334 320Z" fill="#555"/><path d="M338 284h38M338 294h40M340 304h38M342 314h34M349 276v46M361 292v32M373 276v46" stroke="#aaa" stroke-width="3" stroke-dasharray="7 3"/><path d="M341 278l8 8 8-8" stroke="#eee" stroke-width="4"/>
          <rect x="406" y="268" width="58" height="58" fill="#fff"/><path d="M408 268V326M421 268V326M450 268V326M463 268V326M406 269H465M406 283H465M406 311H465M406 325H465" stroke="#bbb" stroke-width="3"/><path d="M436 268V328M406 298H466" stroke="#000" stroke-width="4" stroke-dasharray="13 3"/><path d="M429 298H443M436 291V305" stroke="#000" stroke-width="5"/>`)}</div>
      </div>
      <div class="task"></div>
    </div>
    <div class="dlg">
      <div class="dtitle">
        ${frame(36, 93, 291, 339, svg`<defs><linearGradient id="app" x1="0" y1="0" x2="1" y2="1"><stop offset="0" stop-color="#3f74a5"/><stop offset="1" stop-color="#56b786"/></linearGradient></defs><rect x="38" y="293" width="53" height="43" fill="#fafafa" stroke="#a2a7b2" stroke-width="4"/><rect x="42" y="300" width="24" height="29" fill="url(#app)"/><rect x="70" y="300" width="12" height="29" fill="#eee"/><rect x="84" y="300" width="4" height="18" fill="#5b91b5"/>`)}
        ${this.fit("error in .bat file", 102)}<span class="push"></span>
        ${frame(1311, 1347, 300, 336, svg`<path d="M1312 301L1346 335M1346 301L1312 335" stroke="#111" stroke-width="3.500"/>`)}
      </div>
      <div class="dbody">
        ${frame(99, 219, 450, 570, svg`<defs><linearGradient id="err" x1="0" y1="0" x2=".4" y2="1"><stop offset="0" stop-color="#e08080"/><stop offset=".45" stop-color="#cf2424"/><stop offset=".6" stop-color="#b30808"/><stop offset="1" stop-color="#dc2a2a"/></linearGradient></defs><circle cx="159" cy="509" r="57" fill="#aaa"/><circle cx="159" cy="508" r="54" fill="#e6e6e6"/><circle cx="159" cy="508" r="51" fill="url(#err)"/><path d="M138 487L179 529M179 487L138 529" stroke="#f7f7f7" stroke-width="14"/>`)}
        <div class="msg">${this.fit(`line: 10.- error: couldn't execute "C:\\Program Files`, 315.5)}${this.fit(`(x86)\\IC-QMUL\\VGeST\\Y.exe": no such file or directory`, 336)}</div>
      </div>
      <div class="dfoot"><div class="ok">${this.fit("OK", 18.5)}</div></div>
    </div>`;
  }
}
